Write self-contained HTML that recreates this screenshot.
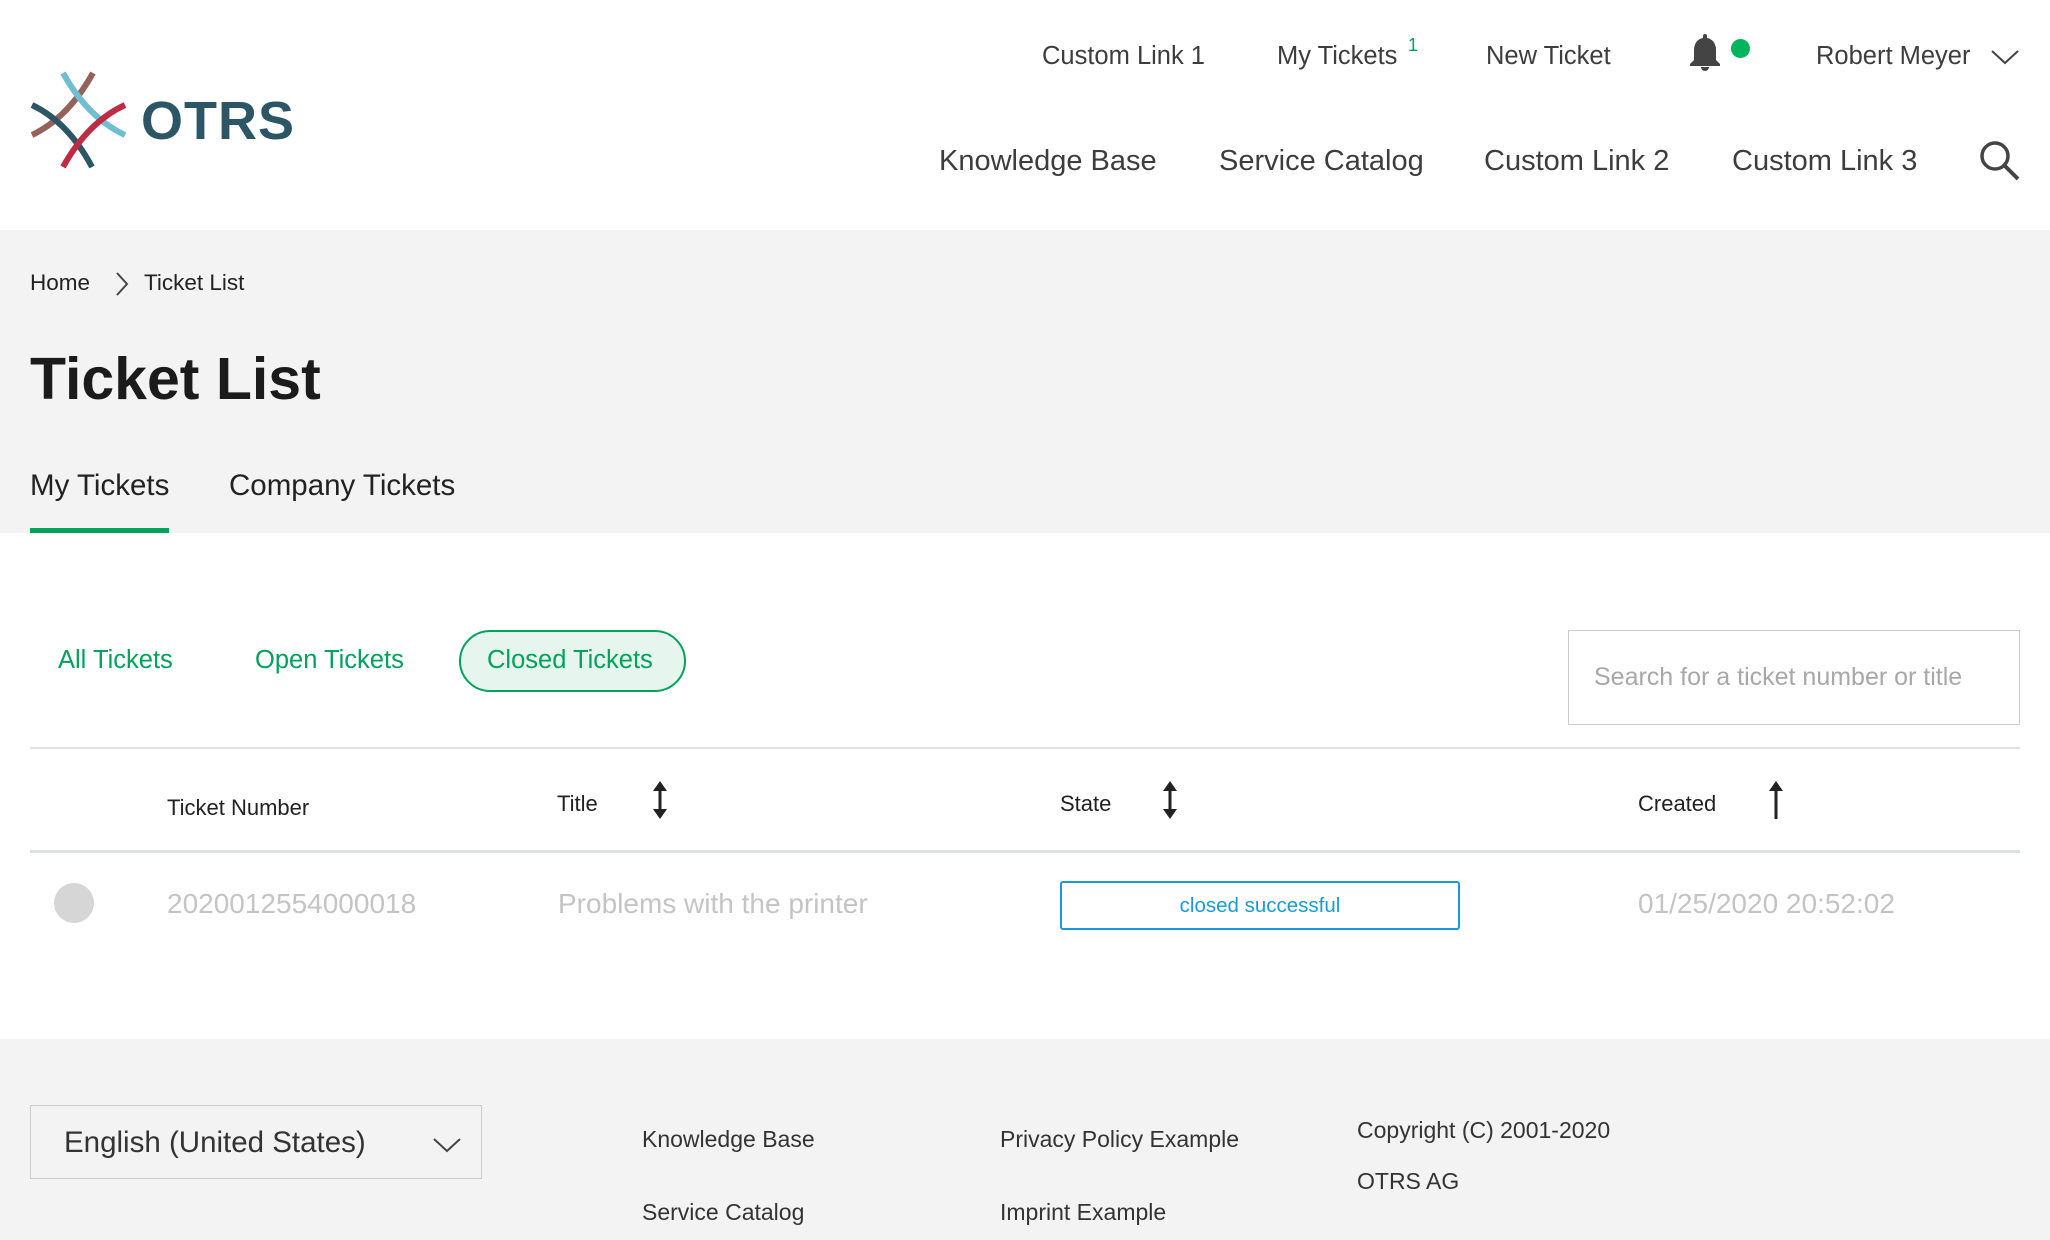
<!DOCTYPE html>
<html><head><meta charset="utf-8"><style>
*{margin:0;padding:0;box-sizing:border-box}
body{width:2050px;height:1240px;overflow:hidden;background:#fff;font-family:"Liberation Sans",sans-serif;color:#333;position:relative}
.a{position:absolute;white-space:nowrap;line-height:1}
.n1{font-size:25.5px;color:#3d3d3d;top:44px}
.n2{font-size:29px;color:#3d3d3d;top:147px}
.g{color:#00a35b;font-size:25.5px;top:648px}
.h{font-size:22px;color:#222;top:797px}
.f{font-size:23px;color:#333}
.c{font-size:28px;color:#c4c4c4;top:890px}
</style></head><body>
<!-- logo -->
<svg class="a" style="left:28px;top:70px" width="104" height="102" viewBox="0 0 104 102">
<path d="M65 3 Q40 48 4 65" stroke="#94625a" stroke-width="6" fill="none"/>
<path d="M35 3 Q60 48 97 65" stroke="#6fbfd0" stroke-width="6" fill="none"/>
<path d="M4 35 Q40 52 64 97" stroke="#2c5566" stroke-width="6" fill="none"/>
<path d="M97 35 Q60 52 35 97" stroke="#be2c44" stroke-width="6" fill="none"/>
</svg>
<div class="a" style="left:141px;top:94px;font-size:54px;font-weight:bold;color:#2c5566;letter-spacing:1px">OTRS</div>
<!-- top nav -->
<div class="a n1" style="left:1042px">Custom Link 1</div>
<div class="a n1" style="left:1277px">My Tickets</div>
<div class="a" style="left:1408px;top:36px;font-size:18px;color:#00a35b">1</div>
<div class="a n1" style="left:1486px">New Ticket</div>
<svg class="a" style="left:1687px;top:32px" width="36" height="42" viewBox="0 0 36 42"><path d="M18 2 a2 2 0 0 1 2 2 v2 c6 1 9 6 9 12 v10 l4 4 v2 h-30 v-2 l4 -4 v-10 c0 -6 3 -11 9 -12 v-2 a2 2 0 0 1 2 -2z M14 35 h8 a4 4 0 0 1 -8 0z" fill="#444"/></svg>
<div class="a" style="left:1731px;top:39px;width:19px;height:19px;border-radius:50%;background:#00b45f"></div>
<div class="a n1" style="left:1816px">Robert Meyer</div>
<svg class="a" style="left:1990px;top:48px" width="30" height="18" viewBox="0 0 30 18"><path d="M2 3 L15 15 L28 3" stroke="#444" stroke-width="2" fill="none"/></svg>
<div class="a n2" style="left:939px">Knowledge Base</div>
<div class="a n2" style="left:1219px">Service Catalog</div>
<div class="a n2" style="left:1484px">Custom Link 2</div>
<div class="a n2" style="left:1732px">Custom Link 3</div>
<svg class="a" style="left:1978px;top:139px" width="44" height="44" viewBox="0 0 44 44"><circle cx="17" cy="17" r="13" stroke="#444" stroke-width="3.5" fill="none"/><path d="M27 27 L40 40" stroke="#444" stroke-width="4"/></svg>
<!-- gray band -->
<div class="a" style="left:0;top:230px;width:2050px;height:303px;background:#f3f3f3"></div>
<div class="a f" style="left:30px;top:272px;font-size:22.5px;color:#222">Home</div>
<svg class="a" style="left:114px;top:271px" width="16" height="26" viewBox="0 0 16 26"><path d="M3 2 L13 13 L3 24" stroke="#444" stroke-width="2" fill="none"/></svg>
<div class="a f" style="left:144px;top:272px;font-size:22.5px;color:#222">Ticket List</div>
<div class="a" style="left:30px;top:350px;font-size:59px;font-weight:bold;color:#1b1b1b">Ticket List</div>
<div class="a" style="left:30px;top:471px;font-size:29.5px;color:#222">My Tickets</div>
<div class="a" style="left:229px;top:471px;font-size:29.5px;color:#222">Company Tickets</div>
<div class="a" style="left:30px;top:528px;width:139px;height:5px;background:#00a35b"></div>
<!-- filters -->
<div class="a g" style="left:58px">All Tickets</div>
<div class="a g" style="left:255px">Open Tickets</div>
<div class="a" style="left:459px;top:630px;width:227px;height:62px;border:2px solid #00a35b;border-radius:31px;background:#e6f6ee"></div>
<div class="a g" style="left:487px">Closed Tickets</div>
<div class="a" style="left:1568px;top:630px;width:452px;height:95px;border:1.5px solid #ccc;background:#fff"></div>
<div class="a" style="left:1594px;top:665px;font-size:25px;color:#a8a8a8">Search for a ticket number or title</div>
<div class="a" style="left:30px;top:747px;width:1990px;height:2px;background:#e2e2e2"></div>
<!-- table header -->
<div class="a h" style="left:167px;top:797px">Ticket Number</div>
<div class="a h" style="left:557px;top:793px">Title</div>
<div class="a h" style="left:1060px;top:793px">State</div>
<div class="a h" style="left:1638px;top:793px">Created</div>
<svg class="a" style="left:650px;top:779px" width="20" height="42" viewBox="0 0 20 42"><path d="M10 4 V38" stroke="#222" stroke-width="3"/><path d="M3 12 L10 2 L17 12Z M3 30 L10 40 L17 30Z" fill="#222"/></svg>
<svg class="a" style="left:1160px;top:779px" width="20" height="42" viewBox="0 0 20 42"><path d="M10 4 V38" stroke="#222" stroke-width="3"/><path d="M3 12 L10 2 L17 12Z M3 30 L10 40 L17 30Z" fill="#222"/></svg>
<svg class="a" style="left:1766px;top:779px" width="20" height="42" viewBox="0 0 20 42"><path d="M10 4 V40" stroke="#222" stroke-width="3"/><path d="M3 12 L10 2 L17 12Z" fill="#222"/></svg>
<div class="a" style="left:30px;top:850px;width:1990px;height:3px;background:#dde0e3"></div>
<!-- row -->
<div class="a" style="left:54px;top:883px;width:40px;height:40px;border-radius:50%;background:#d6d6d6"></div>
<div class="a c" style="left:167px">2020012554000018</div>
<div class="a c" style="left:558px">Problems with the printer</div>
<div class="a" style="left:1060px;top:881px;width:400px;height:49px;border:2px solid #1a9bd7;border-radius:3px;text-align:center;line-height:45px;font-size:20.5px;color:#1a9bd7">closed successful</div>
<div class="a c" style="left:1638px">01/25/2020 20:52:02</div>
<!-- footer -->
<div class="a" style="left:0;top:1039px;width:2050px;height:201px;background:#f3f3f3"></div>
<div class="a" style="left:30px;top:1105px;width:452px;height:74px;border:1.5px solid #ccc;background:#f3f3f3"></div>
<div class="a" style="left:64px;top:1128px;font-size:29.5px;color:#333">English (United States)</div>
<svg class="a" style="left:432px;top:1136px" width="30" height="18" viewBox="0 0 30 18"><path d="M2 3 L15 15 L28 3" stroke="#444" stroke-width="2" fill="none"/></svg>
<div class="a f" style="left:642px;top:1128px">Knowledge Base</div>
<div class="a f" style="left:642px;top:1201px">Service Catalog</div>
<div class="a f" style="left:1000px;top:1128px">Privacy Policy Example</div>
<div class="a f" style="left:1000px;top:1201px">Imprint Example</div>
<div class="a f" style="left:1357px;top:1119px">Copyright (C) 2001-2020</div>
<div class="a f" style="left:1357px;top:1170px">OTRS AG</div>
</body></html>
